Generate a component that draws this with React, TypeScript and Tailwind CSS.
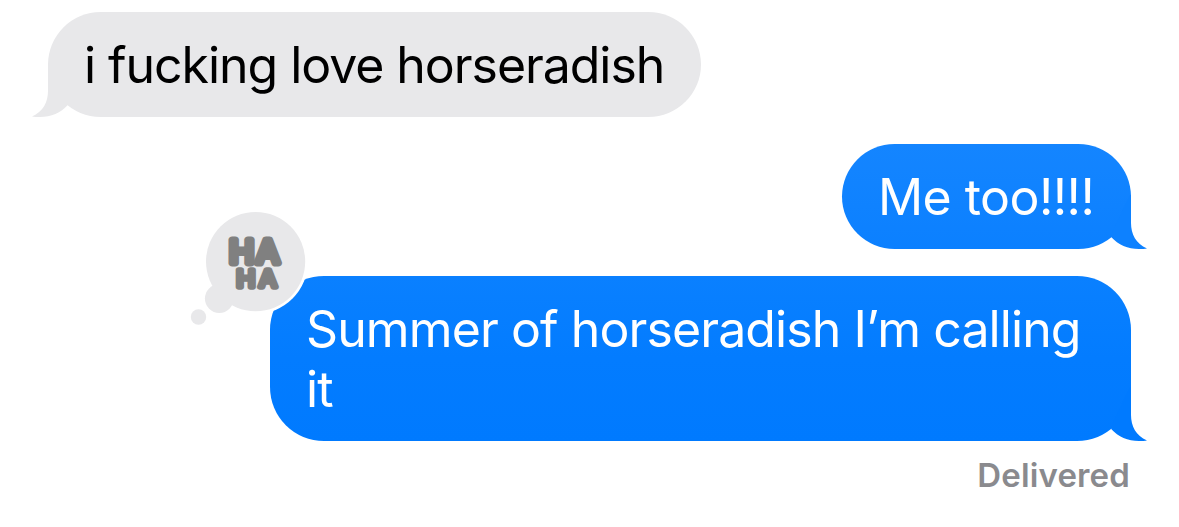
function Tail({ className }: { className: string }) {
  return (
    <svg className={`absolute bottom-0 h-[54px] w-9 ${className}`} viewBox="0 0 36 54" fill="currentColor">
      <path d="M19 0H20V28C20 39 25 49 36 53.4C34 54 31 54 28 54C17 54 7 49.5 .4 42.2L0 40Z" />
    </svg>
  )
}

function HahaReaction() {
  return (
    <svg className="absolute -top-[71px] -left-[85px] h-[130px] w-[130px]" viewBox="0 0 130 130">
      <circle cx="70.6" cy="56.6" r="52.3" fill="#fff" />
      <g fill="#e8e8ea">
        <circle cx="70.6" cy="56.6" r="49.6" />
        <circle cx="34.3" cy="93.6" r="14.4" />
        <circle cx="13.5" cy="112" r="7.7" />
      </g>
      <g
        fill="#808080"
        stroke="#808080"
        strokeLinejoin="round"
        strokeLinecap="round"
        fontFamily="Inter, sans-serif"
        fontWeight="400"
      >
        <text x="42.2 67.8" y="58.2" fontSize="31.6" strokeWidth="7" transform="scale(1.05 1)">HA</text>
        <text x="46.1 66.4" y="82.3" fontSize="22.3" strokeWidth="5.4" transform="scale(1.12 1)">HA</text>
      </g>
    </svg>
  )
}

export default function App() {
  return (
    <main className="flex h-[527px] w-[1179px] flex-col overflow-hidden bg-white pt-3 pr-12 pl-12 font-['Inter',sans-serif] text-[50px] leading-[60px]">
      <div className="relative h-[105px] w-[653px] rounded-[52.5px] bg-[#e8e8ea] pt-[23px] pl-9 whitespace-nowrap text-black">
        <Tail className="-left-4 -scale-x-100 text-[#e8e8ea]" />
        <span className="relative tracking-[-1.05px]">i fucking love horseradish</span>
      </div>

      <div className="relative mt-[27px] h-[105px] w-[289px] self-end rounded-[52.5px] bg-linear-to-b from-[#1485ff] to-[#0b80ff] pt-[23px] pl-9 whitespace-nowrap text-white">
        <Tail className="-right-4 text-[#0d81ff]" />
        <span className="relative tracking-[-0.55px]">Me too!!!!</span>
      </div>

      <div className="relative mt-[27px] h-[165px] w-[861px] self-end rounded-[54px] bg-linear-to-b from-[#0a80ff] via-[#037cff] to-[#007aff] pt-[23px] pl-9 text-white">
        <Tail className="-right-4 text-[#007aff]" />
        <HahaReaction />
        <p className="relative tracking-[-0.9px] whitespace-nowrap">
          Summer of horseradish I’m calling
          <br />
          it
        </p>
      </div>

      <div className="mt-[14px] mr-px self-end text-[33px] leading-10 font-semibold tracking-[0.15px] text-[#8a8a8e]">Delivered</div>
    </main>
  )
}
